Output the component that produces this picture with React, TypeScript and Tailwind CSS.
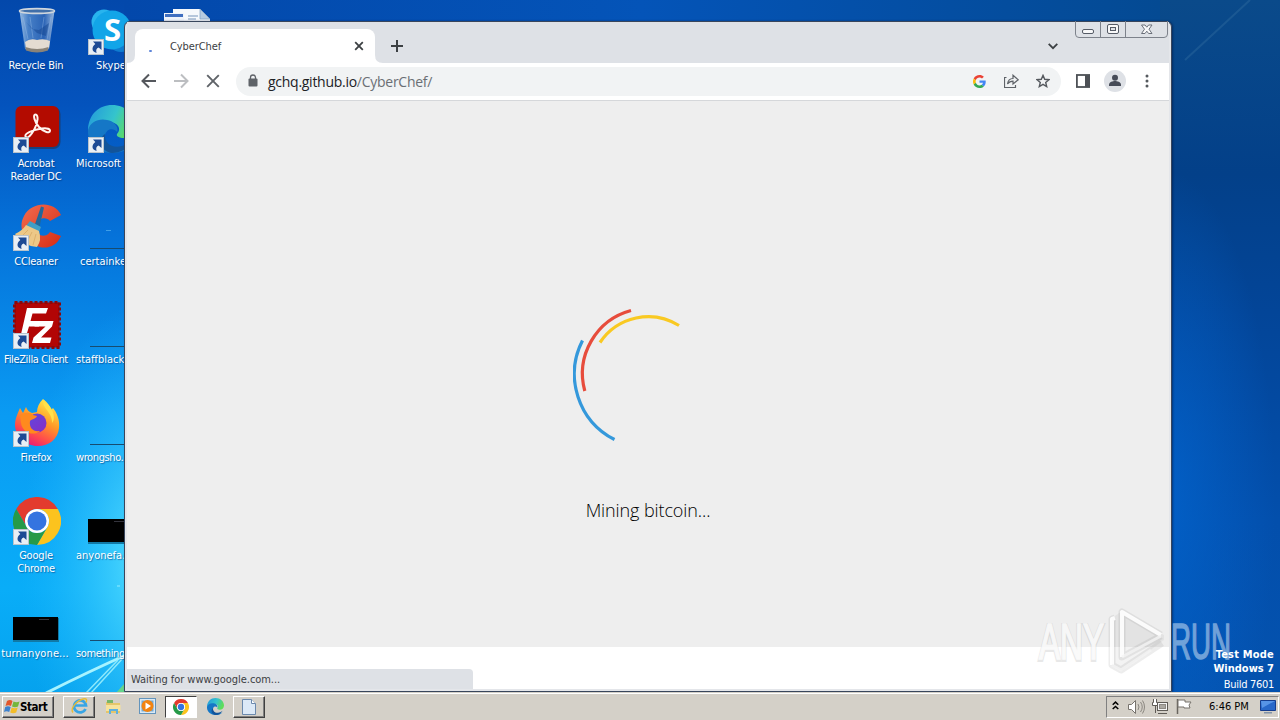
import React from 'react';

interface DesktopItem {
  label: string[];
  icon: React.ReactNode;
  shortcut?: boolean;
  labelClass?: string;
}

const ShortcutArrow = () => (
  <svg className="absolute bottom-0 left-0" width="16" height="16" viewBox="0 0 16 16">
    <rect x="0.5" y="0.5" width="15" height="15" fill="#e9eff5" stroke="#b9c3cc" />
    <path d="M5 2.500h8.500v8.500l-2.800-2.600C8.300 9.200 7.700 11 8.600 14 3.600 12.700 3.200 8.300 7.300 5z" fill="#1d4a94" />
  </svg>
);

const RecycleBin = () => (
  <svg width="48" height="48" viewBox="0 0 48 48">
    <defs>
      <linearGradient id="bin" x1="0" x2="1">
        <stop offset="0" stopColor="#a9c8e8" />
        <stop offset="0.250" stopColor="#4f86ca" />
        <stop offset="0.700" stopColor="#2f66b6" />
        <stop offset="1" stopColor="#a9c4e4" />
      </linearGradient>
    </defs>
    <path d="M6.500 4 12 42Q24 47 36 42L41.500 4z" fill="url(#bin)" opacity="0.900" />
    <path d="M12 35q5-4 12-2 7-2 13 1l-1 7q-12 4-23 0z" fill="#e4dcd2" />
    <path d="M12.300 40q12 4 23.200 0l-.5 3.500q-11 4-22 0z" fill="#8a8378" />
    <path d="M10 10l5 22M17 10l3 21M31 10l-3 21M38 10l-4 23" stroke="#a9c9ee" strokeWidth="1" opacity="0.350" />
    <path d="m13 15 6 7 7 1 10-7-3 13-9-3z" fill="#174994" opacity="0.550" />
    <ellipse cx="24" cy="4" rx="17.500" ry="2.400" fill="#416fa9" stroke="#cfd6dd" strokeWidth="1.600" />
  </svg>
);

const Acrobat = () => (
  <svg width="48" height="48" viewBox="0 0 48 48">
    <rect x="3" y="2" width="44.500" height="42" rx="7" fill="#27314f" opacity="0.600" />
    <rect x="2.500" y="1" width="43.500" height="41" rx="6" fill="#b30b00" />
    <path d="M13 32c-2.500-2 2-5.500 12-7.800 7-1.500 12-1 12 1.300 0 3.500-6 1.800-11-3.500-4.500-5-6.500-12.500-3.500-12.500s2.800 7.500-1 14.500c-3.400 6.200-6.700 9.700-8.500 8z" fill="none" stroke="#fff4ee" strokeWidth="2" />
  </svg>
);

const CCleaner = () => (
  <svg width="48" height="48" viewBox="0 0 48 48">
    <defs>
      <linearGradient id="cc" x1="0" y1="0" x2="1" y2="1">
        <stop offset="0" stopColor="#f26c4f" />
        <stop offset="1" stopColor="#d62c14" />
      </linearGradient>
    </defs>
    <path d="M48 12 37 18c-4-5-13-3-14 5-1 10 9 13 14 6l11 4C43 45 31 47 22 42 10 36 5 24 11 13 18-1 41-3 48 12z" fill="url(#cc)" />
    <path d="M28 3.500 31 4.500 26 26 21 24z" fill="#21689b" />
    <path d="m17 18 11 6-2 5-13-6z" fill="#3f9fc6" />
    <path d="m13 22 13 6q3 9-2 16-14-1-22-13 7-3 11-9z" fill="#ecc887" />
    <path d="m15 27-7 7m11-5-5 10m9-8-3 11" stroke="#dcb06c" strokeWidth="1" />
  </svg>
);

const FileZilla = () => (
  <svg width="48" height="48" viewBox="0 0 48 48">
    <rect x="1.500" y="1.500" width="45" height="45" fill="#b20505" stroke="#8c0709" strokeWidth="3" strokeDasharray="3 2" />
    <path d="M14 7h21l-2 5.500H19.500L17.500 20h10l-1.500 5.500H16L11 42H6z" fill="#fff" />
    <path d="M23 20h17.500l-1.500 5.500L28 36.500h10.500L37 42H19l1.500-5.500 12-11H21.500z" fill="#fff" />
  </svg>
);

const Firefox = () => (
  <svg width="48" height="48" viewBox="0 0 48 48">
    <defs>
      <linearGradient id="fox" x1="0.800" y1="0" x2="0.300" y2="1">
        <stop offset="0" stopColor="#fff44f" />
        <stop offset="0.450" stopColor="#ff9827" />
        <stop offset="0.750" stopColor="#ff4c4c" />
        <stop offset="1" stopColor="#e5177b" />
      </linearGradient>
      <linearGradient id="globe" x1="0" y1="0" x2="1" y2="1">
        <stop offset="0" stopColor="#5a4be0" />
        <stop offset="1" stopColor="#8a2bc4" />
      </linearGradient>
    </defs>
    <path d="M30 0c5 4 7 7 8 11l2-2c4 5 7 12 6 20-1 11-10 18-21 18C12 47 3 38 2 27c0-7 2-11 5-18l3 5 3-6c1 3 3 5 6 6l5-1c0-5 2-9 6-13z" fill="url(#fox)" />
    <circle cx="24" cy="24" r="9.500" fill="url(#globe)" />
    <path d="M7 16c5-3 10-3 13 0l4 1c-1 3-5 3-7 5-1 7 3 11 10 10-7 6-18 1-19-8z" fill="#ff8a1e" />
    <path d="M31 1c-4 7 9 12 8 23 3-3 2-9 0-13-2-5-6-7-8-10z" fill="#ffe14a" />
  </svg>
);

const Chrome = ({ size = 48 }: { size?: number }) => (
  <svg width={size} height={size} viewBox="0 0 48 48">
    <path d="M3.200 12A24 24 0 0 1 44.800 12L24 12A12 12 0 0 0 13.600 30Z" fill="#e33b2e" />
    <path d="M44.800 12A24 24 0 0 1 24 48L34.400 30A12 12 0 0 0 24 12Z" fill="#fcc31e" />
    <path d="M3.200 12A24 24 0 0 0 24 48L34.400 30A12 12 0 0 1 13.600 30Z" fill="#269a48" />
    <circle cx="24" cy="24" r="12" fill="#fff" />
    <circle cx="24" cy="24" r="9.500" fill="#3474e0" />
  </svg>
);

const Edge = ({ size = 48 }: { size?: number }) => (
  <svg width={size} height={size} viewBox="0 0 48 48">
    <defs>
      <linearGradient id="edgeTop" x1="0" y1="0" x2="1" y2="0.300">
        <stop offset="0" stopColor="#2297dc" />
        <stop offset="0.600" stopColor="#35c4cc" />
        <stop offset="1" stopColor="#5fdd5a" />
      </linearGradient>
    </defs>
    <path d="M0 24C1 9 11 0 24 0c14 0 24 10 24 21 0 8-6 12-12 12-5 0-8-2-7-4 5-5 1-12-8-12C11 17 1 19 0 30z" fill="url(#edgeTop)" />
    <path d="M0 25c2-8 11-12 19-10 8 1 12 8 10 12-3-4-10-4-12 3-2 8 6 16 18 14 4-1 7-2 9-4-5 6-12 8-20 8C10 48-1 38 0 25z" fill="#1577c6" />
    <path d="M17 29c-1 9 7 15 17 12 4-1 8-3 10-5-4 8-12 12-20 12-11-1-15-14-7-19z" fill="#12549b" />
  </svg>
);

const Skype = () => (
  <svg width="48" height="48" viewBox="0 0 48 48">
    <circle cx="16" cy="15" r="12.500" fill="#28b4ee" />
    <circle cx="33" cy="31" r="14" fill="#0f7cd0" />
    <circle cx="24" cy="23" r="19.500" fill="#12a5e8" />
    <text x="24.500" y="34" textAnchor="middle" className="fill-white font-['Noto_Sans','DejaVu_Sans',sans-serif] text-[31px] font-bold not-italic">S</text>
  </svg>
);

const BlackThumb = () => (
  <svg width="48" height="48" viewBox="0 0 48 48">
    <rect x="0" y="23" width="46" height="24" fill="#1179a6" />
    <rect x="0" y="22" width="45" height="23" fill="#000" />
    <path d="M26 24.500h10" stroke="#33333c" />
  </svg>
);

const LineThumb = () => (
  <svg width="48" height="48" viewBox="0 0 48 48">
    <path d="M2 45.500h46" stroke="#174c70" />
  </svg>
);

const firstColumn: DesktopItem[] = [
  { label: ['Recycle Bin'], icon: <RecycleBin /> },
  { label: ['Acrobat', 'Reader DC'], icon: <Acrobat />, shortcut: true },
  { label: ['CCleaner'], icon: <CCleaner />, shortcut: true },
  { label: ['FileZilla Client'], icon: <FileZilla />, shortcut: true, labelClass: 'tracking-[-0.35px]' },
  { label: ['Firefox'], icon: <Firefox />, shortcut: true },
  { label: ['Google', 'Chrome'], icon: <Chrome />, shortcut: true },
  { label: ['turnanyone...'], icon: <BlackThumb />, labelClass: 'tracking-[0.1px] ml-[-2px]' },
];

const secondColumn: DesktopItem[] = [
  { label: ['Skype'], icon: <Skype />, shortcut: true, labelClass: 'self-start ml-[21px]' },
  { label: ['Microsoft Edge'], icon: <Edge />, shortcut: true, labelClass: 'self-start ml-px' },
  { label: ['certainkey...'], icon: <LineThumb />, labelClass: 'self-start ml-[5px]' },
  { label: ['staffblack...'], icon: <LineThumb />, labelClass: 'self-start ml-px' },
  { label: ['wrongsho...'], icon: <LineThumb />, labelClass: 'self-start ml-px tracking-[-0.4px]' },
  { label: ['anyonefa...'], icon: <BlackThumb />, labelClass: 'self-start ml-px' },
  { label: ['something...'], icon: <LineThumb />, labelClass: 'self-start ml-px tracking-[-0.4px]' },
];

const IconColumn = ({ items }: { items: DesktopItem[] }) => (
  <div className="flex w-[72px] flex-col">
    {items.map((item) => (
      <div key={item.label[0]} className="flex h-[98px] flex-col items-center pt-[7px]">
        <div className="relative ml-[2px] h-12 w-12">
          {item.icon}
          {item.shortcut && <ShortcutArrow />}
        </div>
        <div className={`mt-1 text-center text-[11px] leading-[13px] whitespace-nowrap text-white [text-shadow:1px_1px_1px_rgba(0,40,100,0.5)] ${item.labelClass ?? 'tracking-[-0.2px]'}`}>
          {item.label.map((line) => (
            <div key={line}>{line}</div>
          ))}
        </div>
      </div>
    ))}
  </div>
);

const Wallpaper = () => (
  <svg className="absolute inset-0" width="1280" height="693" viewBox="0 0 1280 693">
    <defs>
      <linearGradient id="left" x1="0" y1="0" x2="0" y2="1">
        <stop offset="0" stopColor="#0348ab" />
        <stop offset="0.150" stopColor="#0453bd" />
        <stop offset="0.350" stopColor="#0574db" />
        <stop offset="0.600" stopColor="#0a9bf3" />
        <stop offset="0.850" stopColor="#09adf8" />
        <stop offset="1" stopColor="#05a2ee" />
      </linearGradient>
      <radialGradient id="glow" gradientUnits="userSpaceOnUse" cx="150" cy="560" r="130" gradientTransform="translate(150 560) scale(1 2) translate(-150 -560)">
        <stop offset="0" stopColor="#63e8ff" stopOpacity="0.900" />
        <stop offset="1" stopColor="#20b8ff" stopOpacity="0" />
      </radialGradient>
      <linearGradient id="top" x1="0" x2="1">
        <stop offset="0" stopColor="#0348ab" />
        <stop offset="0.500" stopColor="#0454b8" />
        <stop offset="1" stopColor="#044a93" />
      </linearGradient>
      <linearGradient id="right" x1="0" y1="0" x2="0" y2="1">
        <stop offset="0" stopColor="#0a4a8a" />
        <stop offset="0.250" stopColor="#034089" />
        <stop offset="0.450" stopColor="#034598" />
        <stop offset="0.750" stopColor="#034fac" />
        <stop offset="1" stopColor="#0452ae" />
      </linearGradient>
      <radialGradient id="shine" gradientUnits="userSpaceOnUse" cx="1165" cy="500" r="110" gradientTransform="translate(1165 500) scale(1 3) translate(-1165 -500)">
        <stop offset="0" stopColor="#0262cb" stopOpacity="0.850" />
        <stop offset="1" stopColor="#0262cb" stopOpacity="0" />
      </radialGradient>
    </defs>
    <rect width="200" height="693" fill="url(#left)" />
    <rect width="200" height="693" fill="url(#glow)" />
    <rect x="124" width="1036" height="30" fill="url(#top)" />
    <rect x="1160" width="120" height="693" fill="url(#right)" />
    <rect x="1160" width="120" height="693" fill="url(#shine)" />
    <path d="M1185 60 1250 0" stroke="#2b679c" strokeWidth="2" opacity="0.500" />
    <path d="M46 693Q90 671 126 655" fill="none" stroke="#a7f3ff" strokeWidth="3" />
    <path d="M86 693 118 660M91 693 124 657" fill="none" stroke="#8ce9fc" strokeWidth="1.500" />
    <path d="M116 693 124 684V693z" fill="#65d58c" />
    <path d="M117 586h3" stroke="#92edff" />
    <path d="M106 230.500h5" stroke="#3f9fe8" />
    {/* document icon peeking over the window */}
    <path d="M173 9h27l10 10v6h-37z" fill="#f6f9fc" />
    <path d="m200 9 10 10h-10z" fill="#b6cbe0" stroke="#7c9dc0" strokeWidth="0.700" />
    <path d="M164 13h20v9h-20z" fill="#eef3fa" />
    <path d="M165 14h18v3h-18z" fill="#3f6fc0" />
    <path d="M188 16h10M188 19h8" stroke="#7795bb" />
  </svg>
);

const CaptionButtons = () => (
  <svg className="absolute top-[-1px] right-[2px]" width="94" height="19" viewBox="0 0 94 19" fill="none">
    <path d="M.5 0v13q0 3.500 3.500 3.500h85q3.500 0 3.500-3.500V0M25.500 0v16.500M50.500 0v16.500" stroke="#7d828b" />
    <rect x="7.500" y="8.500" width="11" height="4" rx="1.500" fill="#f8f8f9" stroke="#555b66" />
    <rect x="32.500" y="3.500" width="11" height="9" rx="1.500" fill="#f8f8f9" stroke="#555b66" />
    <rect x="35.500" y="6.500" width="5" height="3" fill="#dee1e6" stroke="#555b66" />
    <path d="M66.500 4h3.500l1.800 2.200L73.600 4h3.400l-3 4.200 3 4.300h-3.400l-1.800-2.300L70 12.500h-3.500l3-4.300z" fill="#f8f8f9" stroke="#6b707a" />
  </svg>
);

const TabStrip = () => (
  <div className="flex h-[41px] items-end bg-[#dee1e6]">
    <div className="relative ml-[8px] flex h-[34px] w-[240px] items-center rounded-t-[8px] bg-white pl-[14px]">
      <div className="mt-[10px] h-[2px] w-[3px] rounded-full bg-[#5f86d8]" />
      <span className="mt-[2px] ml-[18px] text-[11px] tracking-[-0.1px] text-[#3c4043]">CyberChef</span>
      <svg className="absolute top-[12px] right-[11px]" width="10" height="10" viewBox="0 0 10 10">
        <path d="m1.200 1.200 7.600 7.600m0-7.600L1.200 8.800" stroke="#3c4043" strokeWidth="1.800" />
      </svg>
      <svg className="absolute bottom-0 left-[-8px]" width="8" height="8" viewBox="0 0 8 8">
        <path d="M8 0v8H0q8 0 8-8" fill="#fff" />
      </svg>
      <svg className="absolute right-[-8px] bottom-0" width="8" height="8" viewBox="0 0 8 8">
        <path d="M0 0v8h8Q0 8 0 0" fill="#fff" />
      </svg>
    </div>
    <svg className="mb-[11px] ml-[16px]" width="12" height="12" viewBox="0 0 12 12">
      <path d="M6 0v12M0 6h12" stroke="#3c4043" strokeWidth="2" />
    </svg>
    <svg className="mr-[111px] mb-[13px] ml-auto" width="10" height="7" viewBox="0 0 10 7">
      <path d="m.7.900 4.300 4.300L9.300.900" fill="none" stroke="#3c4043" strokeWidth="1.800" />
    </svg>
  </div>
);

const Toolbar = () => (
  <div className="flex h-[38px] items-center border-b border-[#d5d7da] bg-white pb-px">
    <svg className="ml-[14px]" width="16" height="16" viewBox="0 0 16 16" fill="none" stroke="#55585d" strokeWidth="2">
      <path d="M15 8H2M8 1.500 1.500 8 8 14.500" />
    </svg>
    <svg className="ml-[16px]" width="16" height="16" viewBox="0 0 16 16" fill="none" stroke="#bcbec1" strokeWidth="2">
      <path d="M1 8h13M8 1.500 14.500 8 8 14.500" />
    </svg>
    <svg className="ml-[17px]" width="14" height="14" viewBox="0 0 14 14" fill="none" stroke="#5f6368" strokeWidth="1.900">
      <path d="m1.200 1.200 11.600 11.600m0-11.600L1.200 12.800" />
    </svg>
    <div className="ml-[16px] flex h-[29px] w-[825px] items-center rounded-full bg-[#f1f3f4]">
      <svg className="mb-[1px] ml-[12px]" width="10" height="13" viewBox="0 0 10 13">
        <path d="M2.500 5V3.500a2.500 2.500 0 0 1 5 0V5" fill="none" stroke="#5f6368" strokeWidth="1.300" />
        <rect x="0.500" y="4.500" width="9" height="8" rx="1" fill="#5f6368" />
      </svg>
      <span className="mt-px ml-[10px] font-['Open_Sans','Noto_Sans',sans-serif] text-[14px] leading-[20px] tracking-[-0.27px] text-[#202124]">
        gchq.github.io<span className="text-[#6b6f74]">/CyberChef/</span>
      </span>
      <svg className="mr-[18px] ml-auto" width="13" height="13" viewBox="0 0 48 48">
        <path fill="#EA4335" d="M24 9.500c3.540 0 6.710 1.220 9.210 3.600l6.850-6.850C35.900 2.380 30.470 0 24 0 14.620 0 6.510 5.380 2.560 13.220l7.980 6.190C12.430 13.720 17.740 9.500 24 9.500z" />
        <path fill="#4285F4" d="M46.980 24.550c0-1.570-.15-3.090-.38-4.550H24v9.020h12.940c-.58 2.960-2.260 5.480-4.780 7.180l7.730 6c4.510-4.180 7.090-10.360 7.090-17.650z" />
        <path fill="#FBBC05" d="M10.530 28.590c-.48-1.450-.76-2.990-.76-4.590s.27-3.140.76-4.590l-7.980-6.190C.920 16.460 0 20.120 0 24c0 3.880.92 7.540 2.560 10.780l7.970-6.190z" />
        <path fill="#34A853" d="M24 48c6.480 0 11.930-2.130 15.890-5.810l-7.730-6c-2.150 1.450-4.920 2.300-8.160 2.300-6.260 0-11.570-4.220-13.470-9.910l-7.980 6.190C6.510 42.620 14.620 48 24 48z" />
      </svg>
      <svg className="mr-[17px]" width="15" height="14" viewBox="0 0 15 14" fill="none" stroke="#5f6368" strokeWidth="1.200">
        <path d="M2.500 3.500H.500v10h11V11" />
        <path d="M3.500 10C4 6.300 6 4.600 9 4.500V1.200l5.200 4.600L9 10V7.200C6.500 7.200 4.900 8 3.500 10z" />
      </svg>
      <svg className="mr-[11px]" width="14" height="14" viewBox="0 0 14 14" fill="none" stroke="#55595e" strokeWidth="1.400">
        <path d="m7 1.400 1.700 3.900 4.200.400-3.200 2.800 1 4.100L7 10.400l-3.700 2.200 1-4.100L1.100 5.700l4.200-.4z" />
      </svg>
    </div>
    <svg className="ml-[15px]" width="14" height="14" viewBox="0 0 14 14">
      <rect x="0.900" y="1" width="12.200" height="12" fill="#fff" stroke="#4d5156" strokeWidth="1.800" />
      <path d="M9 1h5v12H9z" fill="#4d5156" />
    </svg>
    <svg className="ml-[14px]" width="22" height="22" viewBox="0 0 22 22">
      <circle cx="11" cy="11" r="11" fill="#dee1e6" />
      <circle cx="11" cy="7.800" r="3" fill="#474c58" />
      <path d="M5 16v-1.500c0-2.500 4-3.500 6-3.500s6 1 6 3.500V16z" fill="#474c58" />
    </svg>
    <svg className="ml-[19px]" width="4" height="14" viewBox="0 0 4 14" fill="#55595e">
      <circle cx="2" cy="2" r="1.500" />
      <circle cx="2" cy="7" r="1.500" />
      <circle cx="2" cy="12" r="1.500" />
    </svg>
  </div>
);

const BrowserWindow = () => (
  <div className="absolute top-[21px] left-[124px] flex h-[671px] w-[1048px] flex-col rounded-t-[6px] border border-[#39465c] bg-[#e4e6ea] px-[2px] pb-[2px] shadow-[1px_0_2px_rgba(0,20,60,0.5)]">
    <TabStrip />
    <CaptionButtons />
    <Toolbar />
    <div className="flex h-[546px] flex-col items-center bg-[#eeeeee] pt-[198px]">
      <svg width="150" height="150" viewBox="573 299 150 150" fill="none" strokeWidth="3.200">
        <path d="M582.500 340.500A73.500 73.500 0 0 0 614.500 439.500" stroke="#3498db" />
        <path d="M631 310.500A65.500 65.500 0 0 0 584.800 391" stroke="#e74c3c" />
        <path d="M600 342.500A58 58 0 0 1 679 325.500" stroke="#f9c922" />
      </svg>
      <div className="mt-[48px] font-['Open_Sans','Noto_Sans',sans-serif] text-[18px] leading-[26px] font-light tracking-[-0.1px] text-black">Mining bitcoin...</div>
    </div>
    <div className="flex flex-1 items-end bg-white">
      <div className="flex h-[20px] w-[346px] items-center rounded-tr-[4px] bg-[#dee1e6] pt-[2px] pl-[4px] text-[11px] tracking-[-0.05px] text-[#3c4043]">
        Waiting for www.google.com...
      </div>
    </div>
  </div>
);

const Watermark = () => (
  <svg className="absolute top-[600px] left-[1030px]" width="210" height="80" viewBox="0 0 210 80">
    <g fontSize="50" fontFamily="Liberation Sans Narrow, Liberation Sans, sans-serif" strokeWidth="1.600">
      <text x="9" y="60" textLength="65" lengthAdjust="spacingAndGlyphs" fill="#777" stroke="#777" strokeWidth="4" opacity="0.160">ANY</text>
      <text x="9" y="59" textLength="65" lengthAdjust="spacingAndGlyphs" fill="#fff" stroke="#fff" opacity="0.800">ANY</text>
      <text x="141" y="59" textLength="60" lengthAdjust="spacingAndGlyphs" fill="#b9d3ee" stroke="#b9d3ee" opacity="0.600">RUN</text>
    </g>
    <g fill="none" strokeLinejoin="round">
      <path d="M92 11 134 35v5L92 71l-10-5V18z" fill="#888" opacity="0.100" />
      <path d="M131 35 92 12v45l39-21M85 18l-3 1v46l9 5 41-27" stroke="#777" strokeWidth="7" opacity="0.130" />
      <path d="M131 35 92 12v45M85 18l-3 1v46" stroke="#fff" strokeWidth="4" opacity="0.900" />
      <path d="m92 57 39-21M82 65l9 5 30-20" stroke="#f4f4f4" strokeWidth="3" opacity="0.800" />
    </g>
  </svg>
);

const Taskbar = () => (
  <div className="relative mt-auto flex h-[28px] items-center border-t border-[#d4d0c8] bg-[#d4d0c8] shadow-[inset_0_1px_0_#fff]">
    <div className="ml-[2px] flex h-[22px] w-[52px] items-center border border-t-white border-r-[#404040] border-b-[#404040] border-l-white pl-[1px] text-[11.5px] font-bold tracking-[-0.45px] text-black shadow-[inset_-1px_-1px_0_#808080]">
      <svg width="16" height="15" viewBox="0 0 16 15">
        <path d="M3 2q3-2 5.500 0L7 7Q4.500 5.500 1.500 7z" fill="#e2572c" />
        <path d="M9.500 2.500q3 1.500 6 0L14 7.500q-3 1.500-6 0z" fill="#74b63b" />
        <path d="M1.200 8Q4 6.500 6.700 8l-1.500 5Q2.500 11.500 0 13z" fill="#3d82ce" />
        <path d="M7.700 8.500q3 1.500 6 0l-1.500 5q-3 1.500-6 0z" fill="#f3bd28" />
      </svg>
      <span className="mt-[2px]">Start</span>
    </div>
    <div className="ml-[9px] flex h-[22px] w-[32px] items-center justify-center border border-t-white border-r-[#404040] border-b-[#404040] border-l-white shadow-[inset_-1px_-1px_0_#808080]">
      <svg width="17" height="17" viewBox="0 0 17 17" fill="none">
        <path d="M14.500 11a6 6 0 1 1 .5-3.500H4.500" stroke="#38a5e5" strokeWidth="2.700" />
        <path d="M2 14.500C-1 11 5 3 12 1c4-1 4 1 3 3.500" stroke="#e9bb35" strokeWidth="1.400" />
      </svg>
    </div>
    <svg className="ml-[10px]" width="17" height="16" viewBox="0 0 17 16">
      <path d="M1 3h5l1 1h8v10H1z" fill="#e5c66a" />
      <path d="M2 1h6v3H2z" fill="#78b668" />
      <path d="M1 6h14.500v6H1z" fill="#f7e39d" />
      <path d="M4 10h9v5h-2v-3H6v3H4z" fill="#60b0dd" />
    </svg>
    <svg className="ml-[17px]" width="17" height="17" viewBox="0 0 17 17">
      <rect x="0.500" y="0.500" width="16" height="15" fill="#dbeaf5" stroke="#6394bc" />
      <rect x="2.500" y="2.500" width="12" height="11" fill="#72a9d5" />
      <circle cx="8.500" cy="8" r="6" fill="#f28411" />
      <path d="m6.500 4.500 5.500 3.500-5.500 3.500z" fill="#fff" />
    </svg>
    <div className="ml-[9px] flex h-[22px] w-[32px] items-center justify-center border border-t-[#404040] border-r-white border-b-white border-l-[#404040] bg-white">
      <Chrome size={16} />
    </div>
    <div className="ml-[10px]">
      <Edge size={17} />
    </div>
    <div className="ml-[9px] flex h-[22px] w-[32px] items-center justify-center border border-t-white border-r-[#404040] border-b-[#404040] border-l-white shadow-[inset_-1px_-1px_0_#808080]">
      <svg width="14" height="16" viewBox="0 0 14 16">
        <path d="M.5.500h9l4 4v11H.5z" fill="#dce9f7" stroke="#6b89ad" />
        <path d="M9.500.500v4h4" fill="#fff" stroke="#6b89ad" />
      </svg>
    </div>
    <div className="mr-[1px] ml-auto flex h-[22px] w-[173px] items-center border border-t-[#808080] border-r-white border-b-white border-l-[#808080]">
      <svg className="mb-[2px] ml-[5px]" width="7" height="9" viewBox="0 0 7 9" fill="none" stroke="#000" strokeWidth="1.500">
        <path d="m.7 3.700 2.800-2.600 2.800 2.600M.7 8l2.800-2.600L6.300 8" />
      </svg>
      <svg className="ml-[9px]" width="17" height="14" viewBox="0 0 17 14" fill="none" stroke="#77736d">
        <path d="M.5 4.500h3l4-4v13l-4-4h-3z" fill="#fff" />
        <path d="M10 4q2 3 0 6M12.500 2q3.500 5 0 10M14.500.500q4 6.500 0 13" strokeWidth="0.800" />
      </svg>
      <svg className="ml-[7px]" width="17" height="16" viewBox="0 0 17 16" fill="none" stroke="#5f5b56">
        <rect x="5.500" y="3.500" width="10" height="8" fill="#f5f5f5" />
        <rect x="7.500" y="5.500" width="6" height="4" fill="#aaa7a1" stroke="#8d8983" />
        <path d="M6 14.500h9M3.500 7v7" />
        <path d="M1.500 0v3.500H.500v3h5v-3h-1V0" fill="#fff" />
      </svg>
      <svg className="ml-[7px]" width="17" height="15" viewBox="0 0 17 15">
        <path d="M1.500 0v15" stroke="#69655f" strokeWidth="1.500" />
        <path d="M2 1h7v2h6l-2 3 1 3H8V8H2z" fill="#fff" stroke="#77736d" />
      </svg>
      <span className="mt-px ml-[16px] text-[11px] whitespace-nowrap text-black">6:46 PM</span>
      <svg className="mr-[2px] ml-auto" width="16" height="14" viewBox="0 0 16 14">
        <path d="M.5.500h15v10h-15z" fill="#2868c9" stroke="#153d8e" />
        <path d="M1 1h14L2 8z" fill="#5794e6" />
        <path d="M4 12h8v1.500H4z" fill="#8193a8" />
      </svg>
    </div>
  </div>
);

export default function App() {
  return (
    <div className="relative flex h-[720px] w-[1280px] flex-col overflow-hidden bg-[#0453b0] font-['DejaVu_Sans_Condensed','DejaVu_Sans',sans-serif]">
      <Wallpaper />
      <div className="relative flex h-[686px] gap-[3px]">
        <IconColumn items={firstColumn} />
        <IconColumn items={secondColumn} />
      </div>
      <BrowserWindow />
      <Watermark />
      <div className="absolute right-[6px] bottom-[28px] text-right text-[11px] leading-[14px] text-white">
        <div className="font-bold tracking-[0.2px]">Test Mode</div>
        <div className="font-bold">Windows 7</div>
        <div className="mt-[2px] tracking-[-0.3px]">Build 7601</div>
      </div>
      <Taskbar />
    </div>
  );
}
